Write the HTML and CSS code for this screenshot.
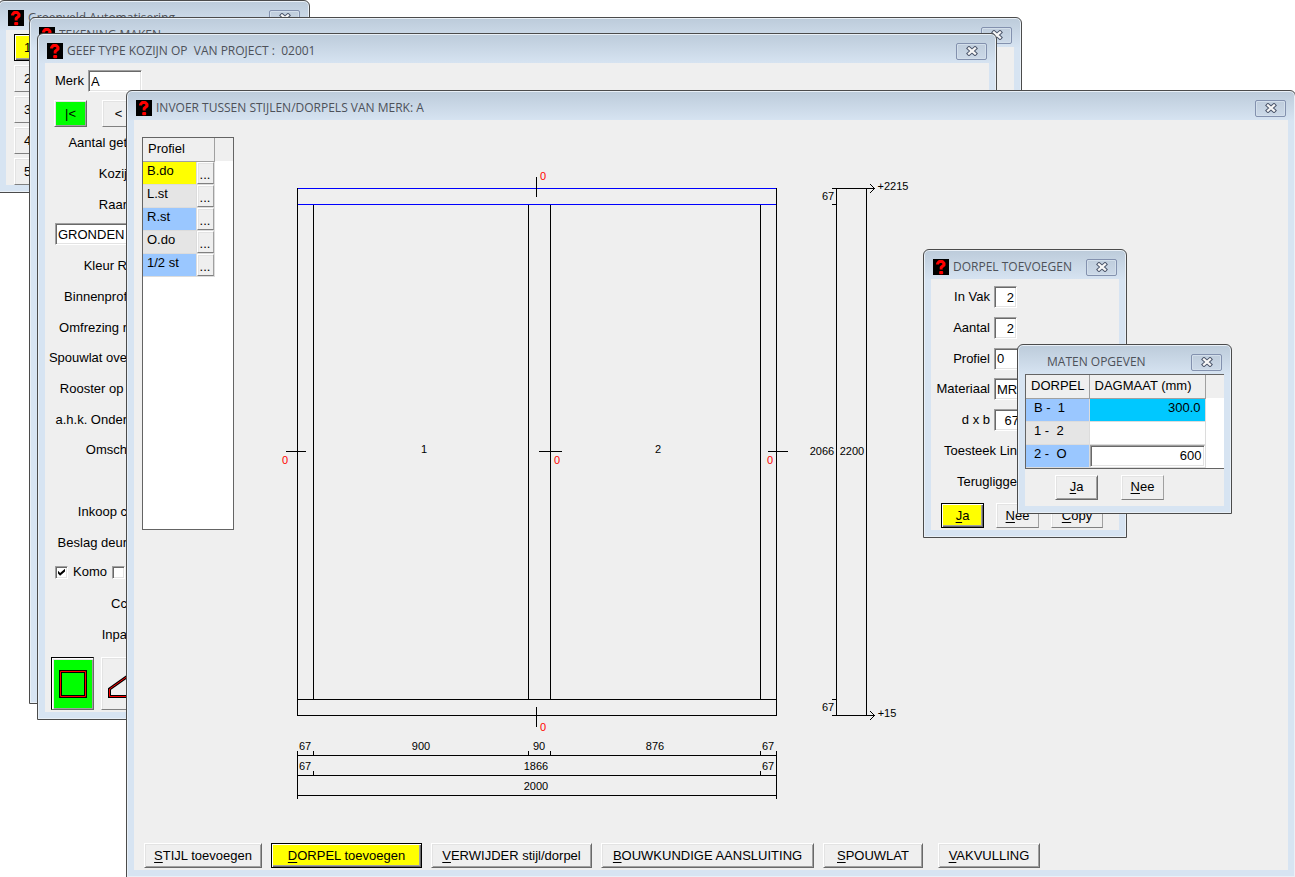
FILE: index.html
```html
<!DOCTYPE html>
<html lang="nl">
<head>
<meta charset="utf-8">
<title>Invoer tussen stijlen/dorpels</title>
<link rel="stylesheet" href="styles.css">
</head>
<body>
<svg class="defs" aria-hidden="true">
  <symbol id="app" viewBox="0 0 16 16">
    <rect width="16" height="16" fill="#000"/>
    <path d="M4.6 5.6V4.4L6.2 2.6H9.4L11 4.2V6L8.2 8.4V10.6" fill="none" stroke="#f00" stroke-width="3" stroke-linejoin="round"/>
    <rect x="6.2" y="12" width="4" height="3.2" rx="1" fill="#f00"/>
  </symbol>
  <symbol id="close" viewBox="0 0 12 10">
    <path d="M3 2.4L9 7.6M9 2.4L3 7.6" fill="none" stroke="#4c566b" stroke-width="4.2" stroke-linecap="square"/>
    <path d="M3 2.4L9 7.6M9 2.4L3 7.6" fill="none" stroke="#f7f7f7" stroke-width="2.2" stroke-linecap="square"/>
  </symbol>
</svg>
<main class="desktop">

  <section class="window win-main">
    <header class="titlebar"><svg class="app"><use href="#app"/></svg><h2>Groenveld Automatisering</h2><button class="close" aria-label="Sluiten"><svg><use href="#close"/></svg></button></header>
    <div class="body menu">
      <button class="btn active">1</button>
      <button class="btn flat">2</button>
      <button class="btn flat">3</button>
      <button class="btn flat">4</button>
      <button class="btn flat">5</button>
    </div>
  </section>

  <section class="window win-drawing">
    <header class="titlebar"><svg class="app"><use href="#app"/></svg><h2>TEKENING MAKEN</h2><button class="close" aria-label="Sluiten"><svg><use href="#close"/></svg></button></header>
    <div class="body"></div>
  </section>

  <section class="window win-type">
    <header class="titlebar"><svg class="app"><use href="#app"/></svg><h2>GEEF TYPE KOZIJN OP  VAN PROJECT :  02001</h2><button class="close" aria-label="Sluiten"><svg><use href="#close"/></svg></button></header>
    <div class="body type-form">
      <div class="merk"><label for="merk">Merk</label><input id="merk" class="field" value="A"></div>
      <div class="nav"><button class="btn go">|&lt;</button><button class="btn flat">&lt;</button></div>
      <div class="rows">
        <span>Aantal get</span>
        <span>Kozij</span>
        <span>Raar</span>
        <input class="field ground" aria-label="Afwerking" value="GRONDEN">
        <span>Kleur R</span>
        <span>Binnenprof</span>
        <span>Omfrezing r</span>
        <span>Spouwlat ove</span>
        <span>Rooster op </span>
        <span>a.h.k. Onder</span>
        <span>Omsch</span>
        <span></span>
        <span>Inkoop c</span>
        <span>Beslag deur</span>
        <div class="checks"><input type="checkbox" id="komo" checked><label for="komo">Komo</label><input type="checkbox" aria-label="Optie"></div>
        <span>Cc</span>
        <span>Inpa</span>
      </div>
      <div class="shapes">
        <button class="btn shape go framed" aria-label="Recht kozijn"><svg viewBox="0 0 40 50"><path d="M8.5 12.5H33.5V37.5H8.5Z" fill="none" stroke="#000" stroke-width="3"/><path d="M8.5 12.5H33.5V37.5H8.5Z" fill="none" stroke="#f00"/></svg></button>
        <button class="btn flat shape" aria-label="Schuin kozijn"><svg viewBox="0 0 40 50"><path d="M7.5 37.5V30L33 12V37.5Z" fill="none" stroke="#000" stroke-width="3"/><path d="M7.5 37.5V30L33 12V37.5Z" fill="none" stroke="#f00"/></svg></button>
      </div>
    </div>
  </section>

  <section class="window win-input">
    <header class="titlebar"><svg class="app"><use href="#app"/></svg><h2>INVOER TUSSEN STIJLEN/DORPELS VAN MERK: A</h2><button class="close" aria-label="Sluiten"><svg><use href="#close"/></svg></button></header>
    <div class="body editor">
      <div class="work">
        <div class="profiles">
          <table class="grid">
            <colgroup><col class="name"><col class="choose"><col></colgroup>
            <thead><tr><th colspan="2">Profiel</th><th class="rest"></th></tr></thead>
            <tbody>
              <tr><td class="yellow">B.do</td><td class="pick"><button class="btn flat more" aria-label="Kies B.do">...</button></td><td class="blank"></td></tr>
              <tr><td class="grey">L.st</td><td class="pick"><button class="btn flat more" aria-label="Kies L.st">...</button></td><td class="blank"></td></tr>
              <tr><td class="blue">R.st</td><td class="pick"><button class="btn flat more" aria-label="Kies R.st">...</button></td><td class="blank"></td></tr>
              <tr><td class="grey">O.do</td><td class="pick"><button class="btn flat more" aria-label="Kies O.do">...</button></td><td class="blank"></td></tr>
              <tr><td class="blue">1/2 st</td><td class="pick"><button class="btn flat more" aria-label="Kies 1/2 st">...</button></td><td class="blank"></td></tr>
            </tbody>
          </table>
        </div>
        <svg class="plan" viewBox="274 160 640 650" role="img" aria-label="Kozijntekening">
          <g fill="none" stroke="#000" shape-rendering="crispEdges">
            <path d="M297.5 188V715.5H776.5V188M297 699.5H777M313.5 205V699M528.5 205V699M550.5 205V699M760.5 205V699"/>
            <path d="M298 188.5H776M298 204.5H776" stroke="#00f"/>
            <path d="M536.5 177V197M536.5 707V727M286 451.5H306M539 451.5H562M768 451.5H788"/>
            <path d="M297.5 751V799M776.5 751V799M297 755.5H777M297 775.5H777M297 795.5H777M313.5 751V755M528.5 751V755M550.5 751V755M760.5 751V755M313.5 771V775M760.5 771V775"/>
            <path d="M836.5 188V716M866.5 188V716M832 188.5H874M832 204.5H836M832 699.5H836M832 715.5H874M870 184L874.5 188.5L870 193M870 711L874.5 715.5L870 720"/>
          </g>
          <g class="dim">
            <text x="305" y="750">67</text><text x="421" y="750">900</text><text x="539" y="750">90</text><text x="655" y="750">876</text><text x="768" y="750">67</text>
            <text x="305" y="770">67</text><text x="536" y="770">1866</text><text x="768" y="770">67</text>
            <text x="536" y="790">2000</text>
            <text x="424" y="453">1</text><text x="658" y="453">2</text>
            <text x="822" y="455">2066</text><text x="852" y="455">2200</text>
            <text x="828" y="200">67</text><text x="828" y="711">67</text>
            <text x="893" y="190">+2215</text><text x="887" y="717">+15</text>
          </g>
          <g class="dim red">
            <text x="543" y="180">0</text><text x="543" y="731">0</text><text x="285" y="464">0</text><text x="557" y="464">0</text><text x="770" y="464">0</text>
          </g>
        </svg>
      </div>
      <footer class="actions">
        <button class="btn b1"><u>S</u>TIJL toevoegen</button>
        <button class="btn active b2"><u>D</u>ORPEL toevoegen</button>
        <button class="btn b3"><u>V</u>ERWIJDER stijl/dorpel</button>
        <button class="btn b4"><u>B</u>OUWKUNDIGE AANSLUITING</button>
        <button class="btn b5"><u>S</u>POUWLAT</button>
        <button class="btn b6"><u>V</u>AKVULLING</button>
      </footer>
    </div>
  </section>

  <section class="window win-add">
    <header class="titlebar"><svg class="app"><use href="#app"/></svg><h2>DORPEL TOEVOEGEN</h2><button class="close" aria-label="Sluiten"><svg><use href="#close"/></svg></button></header>
    <div class="body add-form">
      <div class="lines">
        <div class="line"><label for="vak">In Vak</label><input id="vak" class="field num" value="2"></div>
        <div class="line"><label for="aantal">Aantal</label><input id="aantal" class="field num" value="2"></div>
        <div class="line"><label for="profiel">Profiel</label><input id="profiel" class="field wide" value="0"></div>
        <div class="line"><label for="materiaal">Materiaal</label><input id="materiaal" class="field wide" value="MR"></div>
        <div class="line"><label for="db">d x b</label><input id="db" class="field num mid" value="67"></div>
        <div class="line long"><span>Toesteek Lin</span></div>
        <div class="line long"><span>Terugligge</span></div>
      </div>
      <div class="buttons"><button class="btn active"><u>J</u>a</button><button class="btn flat"><u>N</u>ee</button><button class="btn flat copy"><u>C</u>opy</button></div>
    </div>
  </section>

  <section class="window win-size">
    <header class="titlebar"><h2 class="noicon">MATEN OPGEVEN</h2><button class="close" aria-label="Sluiten"><svg><use href="#close"/></svg></button></header>
    <div class="body size-form">
      <div class="sizes">
        <table class="grid">
          <colgroup><col class="key-col"><col class="value-col"><col></colgroup>
          <thead><tr><th>DORPEL</th><th>DAGMAAT (mm)</th><th class="rest"></th></tr></thead>
          <tbody>
            <tr><td class="blue key">B -  1</td><td class="cyan value">300.0</td><td class="blank"></td></tr>
            <tr><td class="grey key">1 -  2</td><td class="value"></td><td class="blank"></td></tr>
            <tr><td class="blue key">2 -  O</td><td class="edit"><input class="field num" aria-label="Dagmaat 2 - O" value="600"></td><td class="blank"></td></tr>
          </tbody>
        </table>
      </div>
      <div class="buttons"><button class="btn"><u>J</u>a</button><button class="btn flat"><u>N</u>ee</button></div>
    </div>
  </section>

</main>
</body>
</html>
```
FILE: styles.css
```css
* { box-sizing: border-box; }

body {
  margin: 0;
  background: #fff;
  color: #000;
  font: 13px/16px "Liberation Sans", Arial, sans-serif;
}

button, input { font: inherit; color: inherit; border-radius: 0; }
u { text-underline-offset: 2px; }
.defs { display: none; }

.desktop {
  position: relative;
  height: 100vh;
  overflow: hidden;
}

/* Windows on the desktop */
.window {
  position: absolute;
  display: flex;
  flex-direction: column;
  padding: 0 7px 7px;
  border: 1px solid #4b4b4b;
  border-radius: 6px 6px 0 0;
  background: linear-gradient(#bccbda, #d7e4f2 30px);
  box-shadow: inset 0 0 0 1px #e9f0f7;
}
.win-main { left: -2px; top: 0; width: 312px; height: 193px; }
.win-drawing { left: 29px; top: 17px; width: 993px; height: 687px; }
.win-type { left: 37px; top: 33px; width: 960px; height: 687px; }
.win-input { left: 126px; top: 90px; right: -1px; bottom: -1px; }
.win-add { left: 923px; top: 249px; width: 204px; height: 289px; }
.win-size { left: 1017px; top: 344px; width: 215px; height: 170px; }

.titlebar {
  display: flex;
  flex: none;
  align-items: center;
  gap: 4px;
  height: 29px;
  padding: 5px 2px 0;
}
.titlebar h2 {
  flex: 1;
  margin: 0;
  overflow: hidden;
  color: #4d5159;
  font: 400 12px/18px "Open Sans", "Noto Sans", sans-serif;
  white-space: pre;
}
.titlebar .noicon { padding-left: 20px; }
.app { flex: none; width: 16px; height: 16px; }
.close {
  display: grid;
  flex: none;
  place-items: center;
  width: 31px;
  height: 17px;
  padding: 0;
  border: 1px solid #8391ae;
  border-radius: 2px;
  background: linear-gradient(#bfcddc, #ccd9e8);
  box-shadow: inset 0 0 0 1px #d3dfeb;
}
.close svg { width: 12px; height: 10px; }

.body {
  display: flex;
  flex: 1;
  flex-direction: column;
  min-height: 0;
  background: #efefef;
}

/* Classic raised and sunken controls */
.btn {
  height: 25px;
  padding: 0;
  border: 1px solid;
  border-color: #fff #696969 #696969 #fff;
  background: #efefef;
  box-shadow: inset 1px 1px #e3e3e3, inset -1px -1px #a0a0a0;
  text-align: center;
  white-space: nowrap;
}
.btn.flat { box-shadow: inset 1px 1px #e3e3e3; border-color: #fff #a0a0a0 #808080 #fff; }
.btn.active {
  border-color: #000;
  background: #ff0;
  box-shadow: inset 1px 1px #fff, inset -1px -1px #696969, inset -2px -2px #a0a0a0;
}
.btn.go { background: #0f0; }
.btn.framed { border-color: #000 #696969 #696969 #000; box-shadow: inset 1px 1px #fff, inset 2px 2px #e3e3e3, inset -1px -1px #a0a0a0; }

.field {
  height: 22px;
  padding: 0 2px;
  border: 1px solid;
  border-color: #a0a0a0 #fff #fff #a0a0a0;
  background: #fff;
  box-shadow: inset 1px 1px #696969, inset -1px -1px #e3e3e3;
  outline: 0;
}
.field.num { text-align: right; }

.grid { border-collapse: collapse; table-layout: fixed; width: 100%; }
.grid th {
  height: 23px;
  padding: 0 5px 1px;
  border: solid #a0a0a0;
  border-width: 0 1px 1px 0;
  background: #efefef;
  font-weight: 400;
  text-align: left;
}
.grid th.rest { padding: 0; border: 0; }
.grid td {
  height: 23px;
  padding: 0 4px 3px;
  border: solid #dcdcdc;
  border-width: 0 1px 1px 0;
  white-space: pre;
}
.grid td.blank { padding: 0; border: 0; }
.grid .yellow { background: #ff0; }
.grid .blue { background: #9ac7ff; }
.grid .grey { background: #e5e5e5; }
.grid .cyan { background: #00c8ff; }

/* Main menu */
.menu { gap: 4px; padding: 4px 8px 0; }
.menu .btn { flex: none; height: 27px; padding-left: 9px; text-align: left; }

/* Frame type form */
.type-form { padding: 7px 6px 2px; }
.merk { display: flex; align-items: center; gap: 4px; padding-left: 4px; }
.merk .field { width: 54px; }
.nav { display: flex; gap: 15px; padding: 8px 3px 0; }
.nav .btn { width: 33px; height: 27px; }
.rows {
  display: grid;
  flex: 1;
  grid-template-columns: 76px;
  grid-auto-rows: 1fr;
  align-items: center;
  white-space: pre;
}
.rows span { justify-self: end; padding-top: 2px; }
.rows .ground { width: 92px; margin-left: 4px; }
.checks { display: flex; align-items: center; gap: 5px; padding-left: 4px; }
.checks input {
  flex: none;
  width: 13px;
  height: 13px;
  margin: 0;
  appearance: none;
  border: 1px solid;
  border-color: #a0a0a0 #fff #fff #a0a0a0;
  background: #fff;
  box-shadow: inset 1px 1px #696969, inset -1px -1px #e3e3e3;
}
.checks input:checked::after {
  display: block;
  width: 7px;
  height: 7px;
  margin: 2px;
  background: #000;
  clip-path: polygon(0 30%, 30% 62%, 100% 0, 100% 40%, 30% 100%, 0 70%);
  content: "";
}
.shapes { display: flex; flex: none; gap: 7px; margin-top: 8px; }
.shape { width: 43px; height: 53px; }
.shape svg { display: block; width: 40px; height: 50px; }

/* Frame editor */
.editor { justify-content: space-between; padding: 17px 8px 2px; }
.work { display: flex; align-items: flex-start; gap: 40px; }
.profiles {
  flex: none;
  width: 92px;
  height: 393px;
  border: 1px solid #646464;
  background: #fff;
}
.profiles .name { width: 53px; }
.profiles .choose { width: 18px; }
.profiles .pick { padding: 0; }
.profiles .more { display: block; width: 17px; height: 22px; padding-top: 4px; line-height: 12px; }
.plan { flex: none; width: 640px; height: 650px; margin-top: 23px; }
.dim { font-size: 11px; text-anchor: middle; }
.red { fill: #f00; }
.actions { display: flex; gap: 9px; padding-left: 2px; }
.b1 { width: 118px; }
.b2 { width: 151px; }
.b3 { width: 161px; }
.b4 { width: 213px; }
.b5 { width: 100px; }
.b6 { width: 102px; margin-left: 6px; }

/* Add transom */
.add-form { justify-content: space-between; padding: 3px 10px 2px 0; }
.lines { display: grid; flex: 1; grid-auto-rows: 1fr; padding-bottom: 6px; }
.line { display: flex; align-items: center; gap: 4px; }
.line label { width: 59px; text-align: right; }
.line .field { width: 23px; }
.line .field.wide { width: 90px; }
.line .field.mid { width: 28px; }
.line.long { justify-content: flex-end; width: 86px; white-space: nowrap; }
.add-form .buttons { display: flex; gap: 12px; padding-left: 10px; }
.buttons .btn { width: 43px; }
.buttons .copy { width: 52px; }

/* Sizes */
.size-form { gap: 6px; }
.sizes { border: solid #646464; border-width: 1px 0 1px 1px; background: #fff; }
.sizes .key-col { width: 63px; }
.sizes .value-col { width: 116px; }
.sizes .key { padding-left: 8px; }
.sizes .value { text-align: right; }
.sizes td.edit { padding: 0; }
.sizes .edit .field { display: block; width: 100%; }
.size-form .buttons { display: flex; gap: 23px; padding-left: 30px; }
```
